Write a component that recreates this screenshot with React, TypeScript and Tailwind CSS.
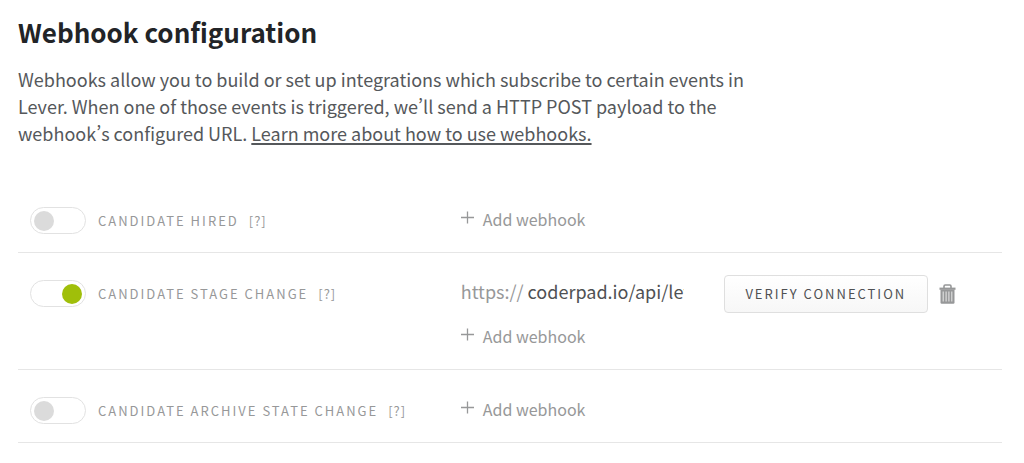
import * as React from 'react';

type Hook = {
  id: string;
  label: string;
  enabled: boolean;
  urls: string[];
};

const initialHooks: Hook[] = [
  { id: 'hired', label: 'Candidate hired', enabled: false, urls: [] },
  { id: 'stage', label: 'Candidate stage change', enabled: true, urls: ['coderpad.io/api/lever/webhook'] },
  { id: 'archive', label: 'Candidate archive state change', enabled: false, urls: [] },
];

function PlusIcon() {
  return (
    <svg viewBox="0 0 14 14" className="mb-0.5 h-3.5 w-3.5" stroke="currentColor" strokeWidth="1.3" aria-hidden="true">
      <path d="M6.5 0.5v12M0 6.5h13" />
    </svg>
  );
}

function TrashIcon() {
  return (
    <svg viewBox="0 0 17 20" className="h-5 w-[17px]" fill="none" aria-hidden="true">
      <path d="M5 4V2.2Q5 1 6.2 1h4.6Q12 1 12 2.2V4" stroke="currentColor" strokeWidth="1.6" />
      <path d="M0.5 3.6h16v2.2h-16z" fill="currentColor" />
      <path d="M1.5 5.5h14V18.6q0 1.2-1.2 1.2H2.7q-1.2 0-1.2-1.2z" fill="currentColor" />
      <path d="M4.2 7.4v10M7.1 7.4v10M9.9 7.4v10M12.8 7.4v10" stroke="#e2e2e2" strokeWidth="1.1" />
    </svg>
  );
}

function Toggle({ id, checked, onChange }: { id: string; checked: boolean; onChange: () => void }) {
  return (
    <input
      id={id}
      type="checkbox"
      checked={checked}
      onChange={onChange}
      className="flex h-[27px] w-14 shrink-0 cursor-pointer appearance-none items-center rounded-full border border-[#e2e2e2] bg-white px-[3px] before:h-5 before:w-5 before:rounded-full before:bg-[#dbdbdb] before:content-[''] checked:justify-end checked:before:bg-[#a0bf0a]"
    />
  );
}

function WebhookRow({ hook, onToggle, onAdd, onRemove, onEdit }: {
  hook: Hook;
  onToggle: () => void;
  onAdd: () => void;
  onRemove: (index: number) => void;
  onEdit: (index: number, url: string) => void;
}) {
  return (
    <li className="grid grid-cols-[45%_1fr] items-start border-b border-[#e6e6e6] pt-[22px] pb-[18px]">
      <div className="mt-[5px] flex items-center pl-3">
        <Toggle id={hook.id} checked={hook.enabled} onChange={onToggle} />
        <label htmlFor={hook.id} className="ml-3 cursor-pointer text-[13px] tracking-[2px] uppercase">
          {hook.label}
        </label>
        <button type="button" title="What is this?" className="ml-2.5 cursor-pointer text-[13px] tracking-[1px]">
          [?]
        </button>
      </div>

      <div className="mt-[3px]">
        {hook.urls.map((url, index) => (
          <div key={index} className="-mt-[3px] mb-[9px] flex items-center">
            <div className="mr-10 flex h-[38px] w-[223px] items-start text-lg/8">
              <label htmlFor={`${hook.id}-${index}`} className="mr-1">https://</label>
              <input
                id={`${hook.id}-${index}`}
                type="text"
                value={url}
                onChange={(e) => onEdit(index, e.target.value)}
                className="min-w-0 flex-1 bg-transparent text-[#4f5153] outline-none"
              />
            </div>
            <button
              type="button"
              className="h-[38px] w-[204px] cursor-pointer rounded border border-[#dfdfdf] bg-linear-to-b from-white to-[#f7f7f7] text-[13px] tracking-[2px] text-[#4f5153] uppercase"
            >
              Verify connection
            </button>
            <button type="button" aria-label="Delete webhook" onClick={() => onRemove(index)} className="ml-[11px] cursor-pointer">
              <TrashIcon />
            </button>
          </div>
        ))}
        <button type="button" onClick={onAdd} className="mb-px flex h-7 cursor-pointer items-center gap-2 text-base/7">
          <PlusIcon />
          Add webhook
        </button>
      </div>
    </li>
  );
}

export default function App() {
  const [hooks, setHooks] = React.useState(initialHooks);

  const update = (id: string, change: (hook: Hook) => Partial<Hook>) =>
    setHooks((list) => list.map((hook) => (hook.id === id ? { ...hook, ...change(hook) } : hook)));

  return (
    <main className="bg-white pt-3 pr-[22px] pl-[18px] font-['Noto_Sans_CJK_SC','Noto_Sans',sans-serif] text-[#979899] [font-feature-settings:'pwid']">
      <h1 className="text-[26px]/10 font-bold text-[#222427]">Webhook configuration</h1>
      <p className="mt-3.5 max-w-[740px] text-lg/[27px] text-[#55585b]">
        Webhooks allow you to build or set up integrations which subscribe to certain events in Lever. When one of
        those events is triggered, we’ll send a HTTP POST payload to the webhook’s configured URL.{' '}
        <a href="#" className="underline decoration-2 underline-offset-2">
          Learn more about how to use webhooks.
        </a>
      </p>

      <ul className="mt-[33px]">
        {hooks.map((hook) => (
          <WebhookRow
            key={hook.id}
            hook={hook}
            onToggle={() => update(hook.id, (h) => ({ enabled: !h.enabled }))}
            onAdd={() => update(hook.id, (h) => ({ urls: [...h.urls, ''] }))}
            onRemove={(index) => update(hook.id, (h) => ({ urls: h.urls.filter((_, i) => i !== index) }))}
            onEdit={(index, url) => update(hook.id, (h) => ({ urls: h.urls.map((u, i) => (i === index ? url : u)) }))}
          />
        ))}
      </ul>
    </main>
  );
}
